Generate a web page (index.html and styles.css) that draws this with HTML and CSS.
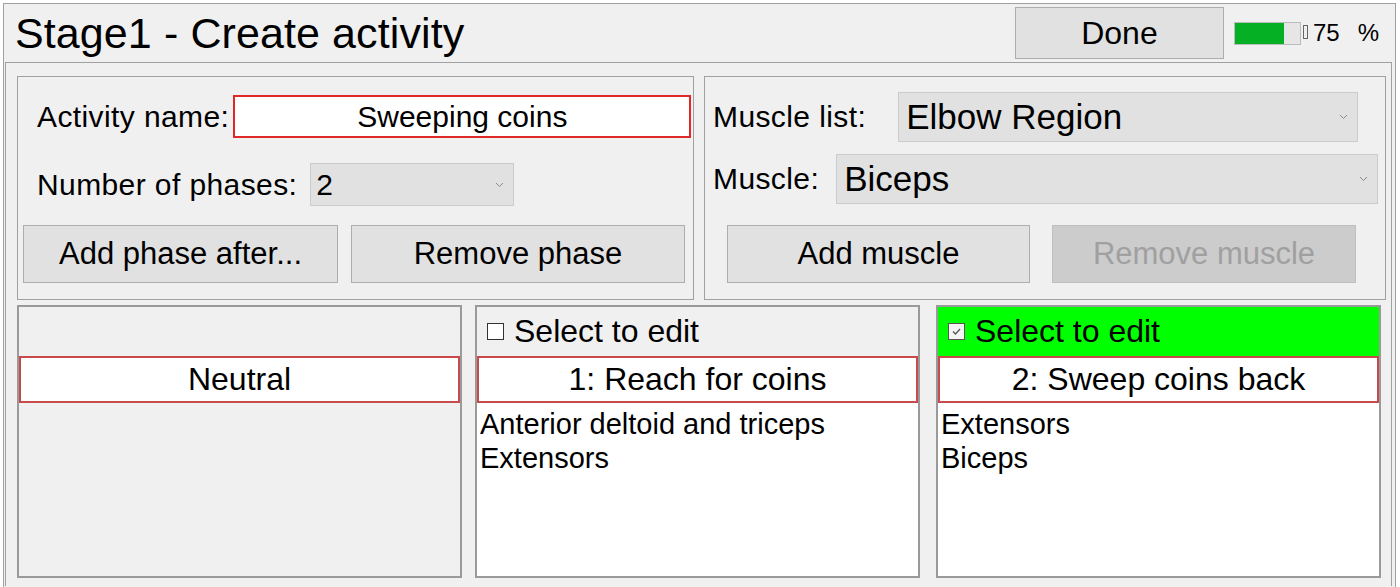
FILE: index.html
```html
<!DOCTYPE html>
<html lang="en">
<head>
    <meta charset="UTF-8">
    <title>Stage1 - Create activity</title>
    <link rel="stylesheet" href="styles.css">
</head>
<body>
    <div class="window">
        <div class="header">
            <h1 class="title">Stage1 - Create activity</h1>
            <button type="button" class="btn done">Done</button>
            <div class="progress"><div class="progress-fill" style="width: 75%"></div></div>
            <span class="tofu"></span>
            <span class="percent-value">75</span>
            <span class="percent-sign">%</span>
        </div>

        <div class="content">
            <div class="top-row">
                <div class="group left-group">
                    <div class="row">
                        <label class="label">Activity name:</label>
                        <div class="textbox activity-name">Sweeping coins</div>
                    </div>
                    <div class="row phases-row">
                        <label class="label">Number of phases:</label>
                        <div class="combo phases-combo">
                            <span>2</span>
                            <svg class="chevron" width="9" height="6" viewBox="0 0 9 6"><path d="M1 1l3.5 3.5L8 1" fill="none" stroke="#8a8a8a" stroke-width="1"/></svg>
                        </div>
                    </div>
                    <div class="btn-row">
                        <button type="button" class="btn add-phase">Add phase after...</button>
                        <button type="button" class="btn remove-phase">Remove phase</button>
                    </div>
                </div>

                <div class="group right-group">
                    <div class="row">
                        <label class="label">Muscle list:</label>
                        <div class="combo big list-combo">
                            <span>Elbow Region</span>
                            <svg class="chevron" width="9" height="6" viewBox="0 0 9 6"><path d="M1 1l3.5 3.5L8 1" fill="none" stroke="#8a8a8a" stroke-width="1"/></svg>
                        </div>
                    </div>
                    <div class="row muscle-row">
                        <label class="label">Muscle:</label>
                        <div class="combo big muscle-combo">
                            <span>Biceps</span>
                            <svg class="chevron" width="9" height="6" viewBox="0 0 9 6"><path d="M1 1l3.5 3.5L8 1" fill="none" stroke="#8a8a8a" stroke-width="1"/></svg>
                        </div>
                    </div>
                    <div class="btn-row muscle-btns">
                        <button type="button" class="btn add-muscle">Add muscle</button>
                        <button type="button" class="btn remove-muscle" disabled>Remove muscle</button>
                    </div>
                </div>
            </div>

            <div class="phases">
                <div class="phase neutral">
                    <div class="phase-head"></div>
                    <div class="phase-name">Neutral</div>
                    <div class="phase-list"></div>
                </div>
                <div class="phase">
                    <div class="phase-head">
                        <span class="check"></span>
                        <span>Select to edit</span>
                    </div>
                    <div class="phase-name">1: Reach for coins</div>
                    <div class="phase-list">
                        <div>Anterior deltoid and triceps</div>
                        <div>Extensors</div>
                    </div>
                </div>
                <div class="phase selected">
                    <div class="phase-head">
                        <span class="check checked">
                            <svg width="11" height="11" viewBox="0 0 11 11"><path d="M2 5.5l2.5 2.5L9 3" fill="none" stroke="#555" stroke-width="1.3"/></svg>
                        </span>
                        <span>Select to edit</span>
                    </div>
                    <div class="phase-name">2: Sweep coins back</div>
                    <div class="phase-list">
                        <div>Extensors</div>
                        <div>Biceps</div>
                    </div>
                </div>
            </div>
        </div>
    </div>
</body>
</html>
```

FILE: styles.css
```css
body {
    margin: 0;
    background-color: white;
    font-family: "Liberation Sans", Arial, sans-serif;
    color: black;
}
.window {
    margin: 3px 4px 0 3px;
    height: 584px;
    border: 1px solid #a0a0a0;
    border-bottom: none;
    background-color: #f0f0f0;
    box-sizing: border-box;
}
.header {
    display: flex;
    align-items: center;
    height: 58px;
}
.title {
    margin: 0 0 0 11px;
    font-size: 43px;
    font-weight: normal;
    letter-spacing: 0.1px;
}
.btn {
    font-family: "Liberation Sans", Arial, sans-serif;
    background-color: #e1e1e1;
    border: 1px solid #adadad;
    color: black;
    padding: 0;
    font-size: 31px;
}
.done {
    margin-left: auto;
    width: 209px;
    height: 52px;
    font-size: 32px;
}
.progress {
    margin-left: 10px;
    width: 67px;
    height: 23px;
    border: 1px solid #bcbcbc;
    background-color: #e6e6e6;
    box-sizing: border-box;
}
.progress-fill {
    height: 100%;
    background-color: #06b025;
}
.tofu {
    width: 3px;
    height: 12px;
    margin-left: 2px;
    margin-bottom: 2px;
    border: 1px solid #666;
}
.percent-value {
    margin-left: 5px;
    font-size: 24px;
}
.percent-sign {
    margin-left: 18px;
    margin-right: 16px;
    font-size: 24px;
}
.content {
    margin-left: 1px;
    margin-right: 3px;
    height: 524px;
    border: 1px solid #a0a0a0;
    border-bottom: none;
    padding: 13px 3px 0 11px;
    box-sizing: border-box;
}
.top-row {
    display: flex;
    gap: 10px;
}
.group {
    height: 224px;
    border: 1px solid #a0a0a0;
    box-sizing: border-box;
}
.left-group {
    width: 677px;
    padding: 18px 0 0 5px;
}
.right-group {
    width: 682px;
    padding: 15px 0 0 0;
}
.row {
    display: flex;
    align-items: center;
}
.label {
    font-size: 30px;
    letter-spacing: 0.4px;
    white-space: nowrap;
    flex-shrink: 0;
    margin-left: 14px;
}
.right-group .label {
    margin-left: 8px;
}
.textbox {
    flex-shrink: 0;
    margin-left: 4px;
    width: 458px;
    height: 43px;
    border: 2px solid #e02828;
    background-color: white;
    box-sizing: border-box;
    font-size: 30px;
    display: flex;
    align-items: center;
    justify-content: center;
}
.phases-row {
    margin-top: 25px;
}
.combo {
    flex-shrink: 0;
    display: flex;
    align-items: center;
    background-color: #e1e1e1;
    border: 1px solid #cccccc;
    box-sizing: border-box;
    font-size: 30px;
    padding: 0 9px 0 5px;
}
.combo span {
    flex: 1;
}
.phases-combo {
    margin-left: 13px;
    width: 204px;
    height: 43px;
}
.big {
    font-size: 35px;
    padding-left: 7px;
}
.list-combo {
    margin-left: 32px;
    width: 460px;
    height: 50px;
}
.muscle-row {
    margin-top: 12px;
}
.muscle-combo {
    margin-left: 17px;
    width: 542px;
    height: 50px;
}
.btn-row {
    display: flex;
    gap: 13px;
    margin-top: 19px;
}
.add-phase {
    width: 315px;
    height: 58px;
}
.remove-phase {
    width: 334px;
    height: 58px;
}
.muscle-btns {
    margin-left: 22px;
    margin-top: 21px;
    gap: 22px;
}
.add-muscle {
    width: 303px;
    height: 58px;
}
.remove-muscle {
    width: 304px;
    height: 58px;
    background-color: #cccccc;
    border-color: #bfbfbf;
    color: #a0a0a0;
}
.phases {
    display: flex;
    gap: 13px;
    margin-top: 5px;
}
.phase {
    width: 445px;
    height: 273px;
    border: 2px solid #9a9a9a;
    box-sizing: border-box;
    display: flex;
    flex-direction: column;
    background-color: white;
}
.phase + .phase + .phase {
    margin-left: 3px;
}
.phase-head {
    height: 49px;
    background-color: #f0f0f0;
    display: flex;
    align-items: center;
    font-size: 32px;
    padding-left: 10px;
}
.selected .phase-head {
    background-color: #00ff00;
}
.check {
    width: 17px;
    height: 17px;
    border: 1px solid #333;
    background-color: white;
    box-sizing: border-box;
    margin-right: 10px;
    display: flex;
    align-items: center;
    justify-content: center;
}
.check.checked {
    border-color: #555;
    background-color: #f4f4f4;
}
.phase-name {
    height: 47px;
    border: 2px solid #c84a4a;
    box-sizing: border-box;
    background-color: white;
    font-size: 32px;
    display: flex;
    align-items: center;
    justify-content: center;
}
.phase-list {
    flex: 1;
    padding: 4px 0 0 3px;
    font-size: 29px;
    line-height: 34px;
}
.neutral .phase-list {
    background-color: #f0f0f0;
}
```
